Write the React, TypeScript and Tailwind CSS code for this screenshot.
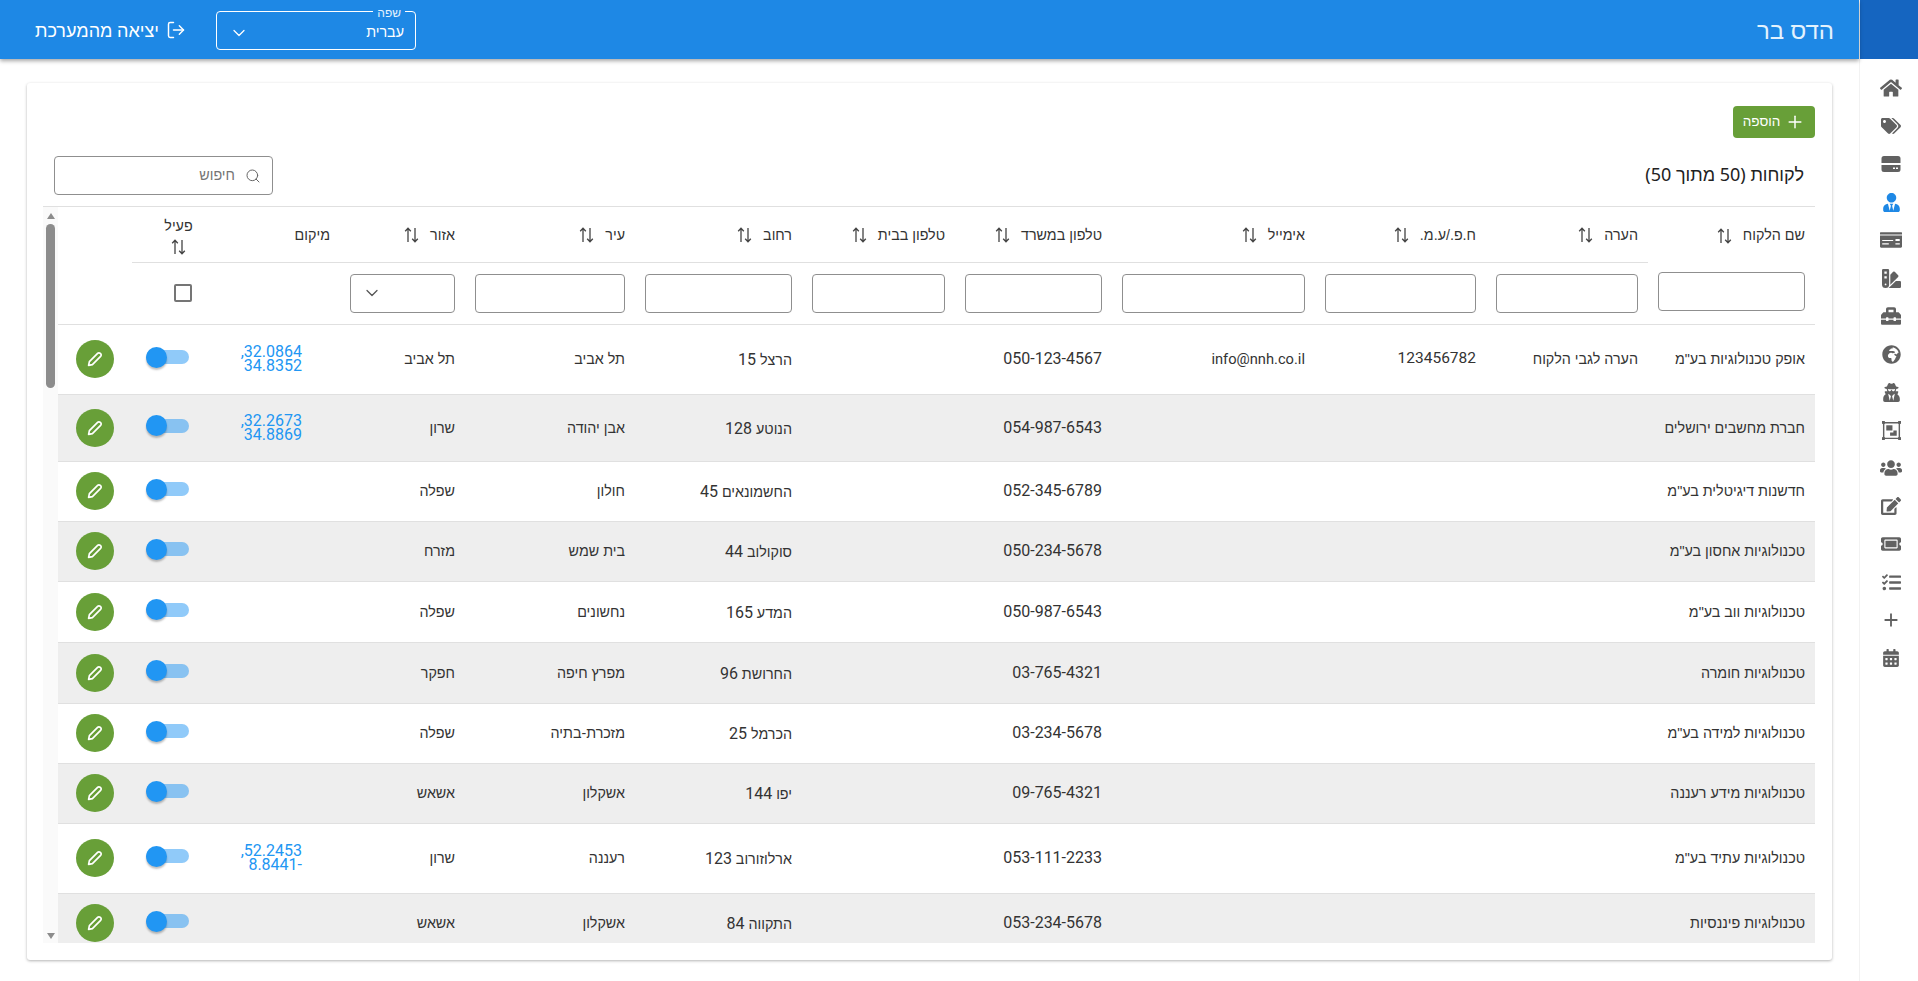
import { ChevronDown, LogOut, Plus, Search } from 'lucide-react';
import {
  FaCalendarAlt,
  FaEdit,
  FaGlobeAfrica,
  FaHome,
  FaMoneyCheck,
  FaSwatchbook,
  FaTags,
  FaTasks,
  FaTicketAlt,
  FaToolbox,
  FaUserSecret,
  FaUserTie,
  FaUsers,
} from 'react-icons/fa';
import { MdAdd } from 'react-icons/md';

function SelectIcon({ size, color }: { size: number; color: string }) {
  return (
    <svg width={size} height={size} viewBox="0 0 20 20" fill={color}>
      <path fillRule="evenodd" d="M1 1h18v18H1zM2.5 2.5v15h15v-15z" />
      <rect x="0" y="0" width="3" height="3" />
      <rect x="17" y="0" width="3" height="3" />
      <rect x="0" y="17" width="3" height="3" />
      <rect x="17" y="17" width="3" height="3" />
      <rect x="4.5" y="4.5" width="6.5" height="5.5" />
      <path d="M12 10h3.5v5.5h-7V12H12z" />
    </svg>
  );
}

function ServerIcon({ size, color }: { size: number; color: string }) {
  return (
    <svg width={size} height={size} viewBox="0 0 20 20" fill={color}>
      <path d="M3 2h14a2.500 2.500 0 0 1 2.500 2.500V9H.5V4.500A2.500 2.500 0 0 1 3 2z" />
      <path fillRule="evenodd" d="M.5 11h19v4.500a2.500 2.500 0 0 1-2.500 2.500H3a2.500 2.500 0 0 1-2.500-2.500zM12 13.500v1.500h2v-1.500zm3 0v1.500h2v-1.500z" />
    </svg>
  );
}

const navIcons = [
  { icon: FaHome, size: 22 },
  { icon: FaTags, size: 20 },
  { icon: ServerIcon, size: 20 },
  { icon: FaUserTie, size: 19, active: true },
  { icon: FaMoneyCheck, size: 22 },
  { icon: FaSwatchbook, size: 19 },
  { icon: FaToolbox, size: 20 },
  { icon: FaGlobeAfrica, size: 19 },
  { icon: FaUserSecret, size: 19 },
  { icon: SelectIcon, size: 19 },
  { icon: FaUsers, size: 22 },
  { icon: FaEdit, size: 20 },
  { icon: FaTicketAlt, size: 20 },
  { icon: FaTasks, size: 19 },
  { icon: MdAdd, size: 26 },
  { icon: FaCalendarAlt, size: 18 },
];

const columns = [
  { label: 'שם הלקוח', width: 167 },
  { label: 'הערה', width: 162 },
  { label: 'ח.פ./ע.מ.', width: 171 },
  { label: 'אימייל', width: 203 },
  { label: 'טלפון במשרד', width: 157 },
  { label: 'טלפון בבית', width: 153 },
  { label: 'רחוב', width: 167 },
  { label: 'עיר', width: 170 },
  { label: 'אזור', width: 125 },
];

const rows = [
  { h: 70, name: 'אופק טכנולוגיות בע"מ', note: 'הערה לגבי הלקוח', id: '123456782', email: 'info@nnh.co.il', phone: '050-123-4567', street: 'הרצל 15', city: 'תל אביב', region: 'תל אביב', loc: '32.0864, 34.8352' },
  { h: 67, name: 'חברת מחשבים ירושלים', phone: '054-987-6543', street: 'הנוטע 128', city: 'אבן יהודה', region: 'שרון', loc: '32.2673, 34.8869' },
  { h: 60, name: 'חדשנות דיגיטלית בע"מ', phone: '052-345-6789', street: 'החשמונאים 45', city: 'חולון', region: 'שפלה' },
  { h: 60, name: 'טכנולוגיות אחסון בע"מ', phone: '050-234-5678', street: 'סוקולוב 44', city: 'בית שמש', region: 'מזרח' },
  { h: 61, name: 'טכנולוגיות ווב בע"מ', phone: '050-987-6543', street: 'המדע 165', city: 'נחשונים', region: 'שפלה' },
  { h: 61, name: 'טכנולוגיות חומרה', phone: '03-765-4321', street: 'החרושת 96', city: 'מפרץ חיפה', region: 'חפקר' },
  { h: 60, name: 'טכנולוגיות למידה בע"מ', phone: '03-234-5678', street: 'הכרמל 25', city: 'מזכרת-בתיה', region: 'שפלה' },
  { h: 60, name: 'טכנולוגיות מידע רעננה', phone: '09-765-4321', street: 'יפו 144', city: 'אשקלון', region: 'אשאש' },
  { h: 70, name: 'טכנולוגיות עתיד בע"מ', phone: '053-111-2233', street: 'ארלוזורוב 123', city: 'רעננה', region: 'שרון', loc: '52.2453, -8.8441' },
  { h: 60, name: 'טכנולוגיות פיננסיות', phone: '053-234-5678', street: 'התקווה 84', city: 'אשקלון', region: 'אשאש' },
];

// the digits in the picture are a size up from the hebrew around them
function Mixed({ text }: { text?: string }) {
  if (!text) return null;
  return (
    <>
      {text.split(/(\d+)/).map((part, i) =>
        i % 2 === 1 ? (
          <span key={i} className="font-['Roboto',sans-serif] text-base">
            {part}
          </span>
        ) : (
          part
        ),
      )}
    </>
  );
}

function SortIcon() {
  return (
    <svg width="15" height="16" viewBox="0 0 15 16" fill="none" stroke="#444" strokeWidth="1.3" className="shrink-0">
      <path d="M4 15V1.500M1.200 4.200 4 1.200l2.800 3" />
      <path d="M11 1v13.500M8.200 11.800l2.800 3 2.800-3" />
    </svg>
  );
}

function Toggle() {
  return (
    <div dir="ltr" className="relative mr-[36px] mb-1 h-[14px] w-[43px] rounded-full bg-[#2196f3]/50">
      <span className="absolute top-[-3.5px] left-0 h-[21px] w-[21px] rounded-full bg-[#2196f3] shadow-[0_2px_2px_rgba(0,0,0,0.25)]" />
    </div>
  );
}

export default function App() {
  return (
    <div dir="rtl" className="flex h-[981px] w-full overflow-hidden bg-white font-['Liberation_Sans','Noto_Sans',sans-serif] text-[14.3px] text-[#333]">
      <aside className="flex w-[59px] shrink-0 flex-col items-center border-l border-[#f2f2f2]">
        <div className="h-[59px] w-full bg-[#1565c0]" />
        <nav className="flex flex-col items-center gap-4 pt-[18px] pl-[4px]">
          {navIcons.map((item, i) => {
            const Icon = item.icon;
            return (
              <div key={i} className="flex h-[22px] w-[22px] items-center justify-center">
                <Icon size={item.size} color={item.active ? '#1e88e5' : '#616161'} />
              </div>
            );
          })}
        </nav>
      </aside>

      <div className="flex min-w-0 flex-1 flex-col">
        <header className="z-10 flex h-[59px] shrink-0 items-center justify-between bg-[#1e88e5] pr-[25px] pl-[35px] text-white shadow-[0_2px_4px_rgba(0,0,0,0.35)]">
          <h1 className="font-['Noto_Sans',sans-serif] text-2xl font-normal text-[#e3f2fd]">הדס בר</h1>
          <div className="flex items-center gap-[30px]">
            <div className="relative mt-[2px] flex h-[39px] w-[200px] items-center justify-between rounded border border-white pt-1 pr-[11px] pl-[12px]">
              <span className="absolute -top-[6px] right-[10px] bg-[#1e88e5] px-[4px] text-xs leading-[14px] text-[#e3f2fd]">שפה</span>
              <span>עברית</span>
              <ChevronDown size={20} strokeWidth={1.5} />
            </div>
            <button className="flex items-center gap-[7px] font-['Noto_Sans',sans-serif] text-lg">
              <LogOut size={20} strokeWidth={1.75} />
              יציאה מהמערכת
            </button>
          </div>
        </header>

        <main className="min-h-0 flex-1 pt-6 pr-[27px] pl-[27px]">
          <section className="h-[877px] rounded-[3px] bg-white pt-[23px] pr-[17px] pl-4 shadow-[0_1px_3px_rgba(0,0,0,0.3)]">
            <button className="flex h-8 w-[82px] items-center justify-center gap-[5px] rounded bg-[#689f38] text-[13.5px] text-white">
              <Plus size={20} strokeWidth={1.75} />
              הוספה
            </button>

            <div className="mt-[18px] mb-[11px] flex h-[39px] items-center justify-between pr-[11px] pl-[11px]">
              <h2 className="mb-1 font-['Noto_Sans',sans-serif] text-lg font-normal text-[#222]">לקוחות (50 מתוך 50)</h2>
              <div className="flex h-[39px] w-[219px] items-center gap-[10px] rounded border border-[#8f8f8f] pr-[11px]">
                <Search size={16} strokeWidth={1.5} color="#666" />
                <span className="text-[#757575]">חיפוש</span>
              </div>
            </div>

            <div className="flex h-[737px] border-t border-[#e0e0e0]">
              <div className="min-w-0 flex-1 overflow-hidden">
                <table className="w-[1757px] table-fixed border-collapse">
                  <colgroup>
                    {columns.map((c) => (
                      <col key={c.label} style={{ width: c.width }} />
                    ))}
                    <col style={{ width: 115 }} />
                    <col style={{ width: 93 }} />
                    <col style={{ width: 74 }} />
                  </colgroup>
                  <thead>
                    <tr className="h-[55px]">
                      {columns.map((c, i) => (
                        <th key={c.label} className={`px-2.5 pt-0.5 text-right font-normal ${i === 0 ? '' : 'border-b border-[#e0e0e0]'}`}>
                          <div className="flex items-center gap-[11px] whitespace-nowrap">
                            {c.label}
                            <SortIcon />
                          </div>
                        </th>
                      ))}
                      <th className="border-b border-[#e0e0e0] px-2.5 pt-0.5 text-right font-normal">מיקום</th>
                      <th className="border-b border-[#e0e0e0] pt-0.5 font-normal">
                        <div className="flex flex-col items-center gap-0.5">
                          פעיל
                          <SortIcon />
                        </div>
                      </th>
                      <th />
                    </tr>
                    <tr className="h-[62px] border-b border-[#e0e0e0]">
                      {columns.map((c, i) => (
                        <td key={c.label} className="px-2.5">
                          <div className={`flex h-[39px] items-center justify-end rounded border border-[#8f8f8f] pl-[11px] ${i === 0 ? 'mb-0.5' : ''}`}>
                            {i === 8 && <ChevronDown size={20} strokeWidth={1.5} color="#555" />}
                          </div>
                        </td>
                      ))}
                      <td />
                      <td className="pr-[33px]">
                        <div className="h-[18px] w-[18px] rounded-[2px] border-2 border-[#757575]" />
                      </td>
                      <td />
                    </tr>
                  </thead>
                  <tbody>
                    {rows.map((r, i) => (
                      <tr key={r.name} style={{ height: r.h }} className={`border-b border-[#e0e0e0] ${i % 2 === 1 ? 'bg-[#eeeeee]' : 'bg-white'}`}>
                        <td className="truncate px-2.5 pt-0.5">{r.name}</td>
                        <td className="truncate px-2.5 pt-0.5">{r.note}</td>
                        <td className="px-2.5 font-['Roboto',sans-serif] text-[15.5px]">{r.id}</td>
                        <td className="px-2.5 font-['Roboto',sans-serif] text-[14.7px]">{r.email}</td>
                        <td className="px-2.5 font-['Roboto',sans-serif] text-base">{r.phone}</td>
                        <td className="px-2.5" />
                        <td className="px-2.5 pt-0.5">
                          <Mixed text={r.street} />
                        </td>
                        <td className="px-2.5 pt-0.5">{r.city}</td>
                        <td className="px-2.5 pt-0.5">{r.region}</td>
                        <td className="pr-[38px] pl-[28px] text-center font-['Roboto',sans-serif] text-base leading-[14px] text-[#2196f3]">{r.loc}</td>
                        <td>
                          <Toggle />
                        </td>
                        <td>
                          <div className="mx-auto flex h-[38px] w-[38px] items-center justify-center rounded-full bg-[#689f38]">
                            <svg width="16" height="16" viewBox="0 0 16 16" fill="none" stroke="#fff" strokeWidth="1.7">
                              <path d="M1.600 14.400 2.400 10.600 10.600 2.400a1.900 1.900 0 0 1 2.700 0l.3.3a1.900 1.900 0 0 1 0 2.700L5.400 13.600z" strokeLinejoin="round" />
                            </svg>
                          </div>
                        </td>
                      </tr>
                    ))}
                  </tbody>
                </table>
              </div>

              <div className="flex w-[15px] shrink-0 flex-col items-center bg-[#fafafa] pt-[6px] pb-[4px]">
                <span className="h-0 w-0 border-x-[4.5px] border-b-[6px] border-x-transparent border-b-[#8c8c8c]" />
                <span className="mt-[5px] h-[164px] w-[9px] rounded-full bg-[#8c8c8c]" />
                <span className="mt-auto h-0 w-0 border-x-[4.5px] border-t-[6px] border-x-transparent border-t-[#8c8c8c]" />
              </div>
            </div>
          </section>
        </main>
      </div>
    </div>
  );
}
